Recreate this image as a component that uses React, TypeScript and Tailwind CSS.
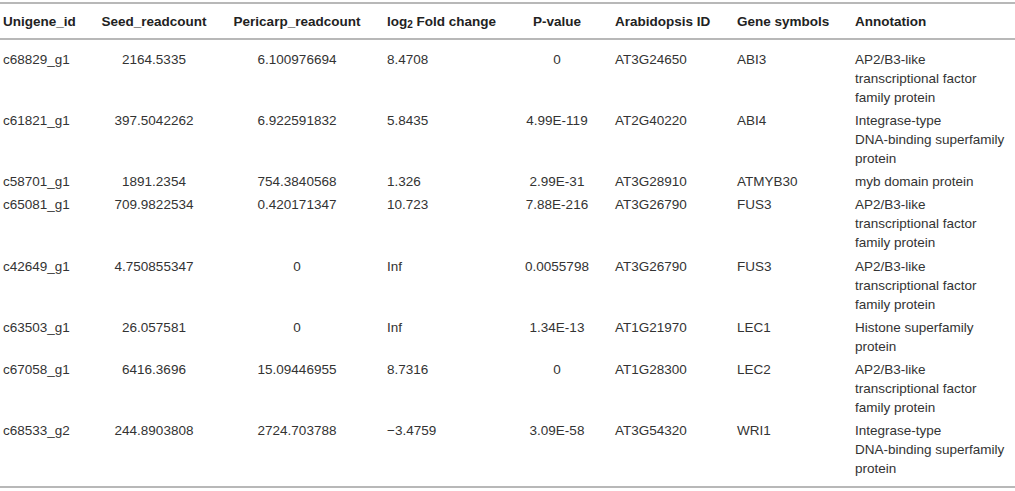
const columns = [
  { label: 'Unigene_id', width: 'w-[100px]', align: 'text-left pl-[3px]' },
  { label: 'Seed_readcount', width: 'w-[108px]', align: 'text-center' },
  { label: 'Pericarp_readcount', width: 'w-[178px]', align: 'text-center' },
  { label: 'log2 Fold change', width: 'w-[114px]', align: 'text-left pl-[1px]' },
  { label: 'P-value', width: 'w-[114px]', align: 'text-center' },
  { label: 'Arabidopsis ID', width: 'w-[122px]', align: 'text-left pl-[1px]' },
  { label: 'Gene symbols', width: 'w-[118px]', align: 'text-left pl-[1px]' },
  { label: 'Annotation', width: 'w-[161px]', align: 'text-left pl-[1px]' },
];

const APETALA = ['AP2/B3-like', 'transcriptional factor', 'family protein'];
const INTEGRASE = ['Integrase-type', 'DNA-binding superfamily', 'protein'];

const rows: { cells: string[]; annotation: string[] }[] = [
  { cells: ['c68829_g1', '2164.5335', '6.100976694', '8.4708', '0', 'AT3G24650', 'ABI3'], annotation: APETALA },
  { cells: ['c61821_g1', '397.5042262', '6.922591832', '5.8435', '4.99E-119', 'AT2G40220', 'ABI4'], annotation: INTEGRASE },
  { cells: ['c58701_g1', '1891.2354', '754.3840568', '1.326', '2.99E-31', 'AT3G28910', 'ATMYB30'], annotation: ['myb domain protein'] },
  { cells: ['c65081_g1', '709.9822534', '0.420171347', '10.723', '7.88E-216', 'AT3G26790', 'FUS3'], annotation: APETALA },
  { cells: ['c42649_g1', '4.750855347', '0', 'Inf', '0.0055798', 'AT3G26790', 'FUS3'], annotation: APETALA },
  { cells: ['c63503_g1', '26.057581', '0', 'Inf', '1.34E-13', 'AT1G21970', 'LEC1'], annotation: ['Histone superfamily', 'protein'] },
  { cells: ['c67058_g1', '6416.3696', '15.09446955', '8.7316', '0', 'AT1G28300', 'LEC2'], annotation: APETALA },
  { cells: ['c68533_g2', '244.8903808', '2724.703788', '\u22123.4759', '3.09E-58', 'AT3G54320', 'WRI1'], annotation: INTEGRASE },
];

export default function App() {
  return (
    <div className="w-[1015px] h-[491px] bg-white pt-[2px] overflow-hidden">
      <table
        className="w-[1015px] table-fixed border-collapse text-[13.5px] leading-[19px] text-[#333333]"
        style={{ fontFamily: '"Liberation Sans", Arial, sans-serif' }}
      >
        <colgroup>
          {columns.map((c) => (
            <col key={c.label} className={c.width} />
          ))}
        </colgroup>
        <thead>
          <tr className="border-t-2 border-b-2 border-[#b8b8b8]">
            {columns.map((c) => (
              <th
                key={c.label}
                className={`h-[36px] align-middle font-bold text-[#222222] whitespace-nowrap ${c.align}`}
              >
                {c.label === 'log2 Fold change' ? (
                  <>
                    log<sub className="text-[10px]">2</sub> Fold change
                  </>
                ) : (
                  c.label
                )}
              </th>
            ))}
          </tr>
        </thead>
        <tbody className="border-b-2 border-[#b8b8b8]">
          {rows.map((row, i) => {
            const first = i === 0;
            const last = i === rows.length - 1;
            const pad = `${first ? 'pt-[9.5px]' : 'pt-[2.15px]'} ${last ? 'pb-[7.5px]' : 'pb-[2.15px]'}`;
            return (
              <tr key={row.cells[0]}>
                {row.cells.map((value, j) => (
                  <td key={j} className={`align-top whitespace-nowrap ${pad} ${columns[j].align}`}>
                    {value}
                  </td>
                ))}
                <td className={`align-top ${pad} ${columns[7].align}`}>
                  {row.annotation.map((line) => (
                    <div key={line} className="whitespace-nowrap">
                      {line}
                    </div>
                  ))}
                </td>
              </tr>
            );
          })}
        </tbody>
      </table>
    </div>
  );
}
